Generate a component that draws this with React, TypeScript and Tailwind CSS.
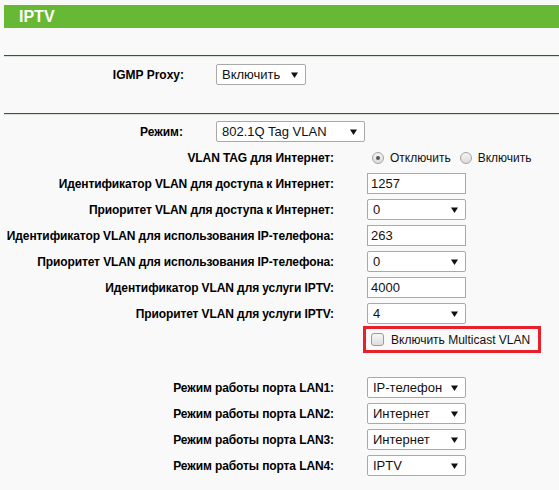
import React from "react";

const Arrow = () => (
  <svg width="7" height="6" viewBox="0 0 7 6" className="shrink-0">
    <path d="M0 0.5 L7 0.5 L3.5 6 Z" fill="#111" />
  </svg>
);

const FakeSelect = ({ value, width }: { value: string; width: string }) => (
  <div
    className={`${width} h-[21px] flex items-center justify-between bg-white border border-[#a9a9a9] rounded-[2px] pl-[5px] pr-[7px] text-[13px] text-[#111]`}
  >
    <span>{value}</span>
    <Arrow />
  </div>
);

const TextBox = ({ value }: { value: string }) => (
  <div className="w-[99px] h-[21px] flex items-center bg-white border border-[#a9a9a9] pl-[3px] text-[13px] text-[#111]">
    {value}
  </div>
);

const Radio = ({ checked }: { checked?: boolean }) => (
  <span className="w-[12px] h-[12px] rounded-full border border-[#a3a3a3] bg-gradient-to-b from-[#f4f4f4] to-[#dcdcdc] flex items-center justify-center">
    {checked && <span className="w-[4px] h-[4px] rounded-full bg-[#555]" />}
  </span>
);

const Row = ({ label, children }: { label: string; children: React.ReactNode }) => (
  <div className="flex items-center h-[21px] mt-[5px]">
    <div className="w-[334px] text-right font-bold text-[12px] text-black whitespace-nowrap tracking-[-0.1px]">
      {label}
    </div>
    <div className="ml-[33px] flex items-center">{children}</div>
  </div>
);

const Divider = () => (
  <div className="ml-[4px]">
    <div className="h-px bg-[#23603c]" />
    <div className="h-px bg-[#d3e5d8]" />
  </div>
);

export default function App() {
  return (
    <div className="w-[559px] h-[490px] overflow-hidden bg-[#f9f9f9] font-['Liberation_Sans',Arial,sans-serif] pt-[5px]">
      {/* header */}
      <div className="ml-[4px] h-[23px] bg-[#67b834] flex items-center pl-[15px]">
        <span className="text-white font-bold text-[16px] leading-none">IPTV</span>
      </div>

      <div className="h-[27px]" />
      <Divider />

      {/* IGMP */}
      <div className="flex items-center h-[21px] mt-[7px]">
        <div className="w-[184px] text-right font-bold text-[12px] text-black">IGMP Proxy:</div>
        <div className="ml-[32px]">
          <FakeSelect value="Включить" width="w-[90px]" />
        </div>
      </div>

      <div className="h-[28px]" />
      <Divider />

      {/* mode */}
      <div className="flex items-center h-[21px] mt-[6px]">
        <div className="w-[183px] text-right font-bold text-[12px] text-black">Режим:</div>
        <div className="ml-[33px]">
          <FakeSelect value="802.1Q Tag VLAN" width="w-[149px]" />
        </div>
      </div>

      <div className="mt-[3px]">
        <Row label="VLAN TAG для Интернет:">
          <div className="flex items-center pl-[5px] text-[12px] text-[#111]">
            <Radio checked />
            <span className="ml-[6px]">Отключить</span>
            <span className="ml-[9px]">
              <Radio />
            </span>
            <span className="ml-[6px]">Включить</span>
          </div>
        </Row>
        <Row label="Идентификатор VLAN для доступа к Интернет:">
          <TextBox value="1257" />
        </Row>
        <Row label="Приоритет VLAN для доступа к Интернет:">
          <FakeSelect value="0" width="w-[99px]" />
        </Row>
        <Row label="Идентификатор VLAN для использования IP-телефона:">
          <TextBox value="263" />
        </Row>
        <Row label="Приоритет VLAN для использования IP-телефона:">
          <FakeSelect value="0" width="w-[99px]" />
        </Row>
        <Row label="Идентификатор VLAN для услуги IPTV:">
          <TextBox value="4000" />
        </Row>
        <Row label="Приоритет VLAN для услуги IPTV:">
          <FakeSelect value="4" width="w-[99px]" />
        </Row>
      </div>

      {/* multicast */}
      <div className="flex mt-[2px]">
        <div className="w-[363px]" />
        <div className="w-[178px] h-[27px] border-[3px] border-[#e8202a] flex items-center pl-[5px] text-[12px] text-[#111]">
          <span className="w-[13px] h-[13px] rounded-[3px] border border-[#9a9a9a] bg-gradient-to-b from-[#f6f6f6] to-[#dedede]" />
          <span className="ml-[7px]">Включить Multicast VLAN</span>
        </div>
      </div>

      <div className="mt-[24px]">
        <Row label="Режим работы порта LAN1:">
          <FakeSelect value="IP-телефон" width="w-[99px]" />
        </Row>
        <Row label="Режим работы порта LAN2:">
          <FakeSelect value="Интернет" width="w-[99px]" />
        </Row>
        <Row label="Режим работы порта LAN3:">
          <FakeSelect value="Интернет" width="w-[99px]" />
        </Row>
        <Row label="Режим работы порта LAN4:">
          <FakeSelect value="IPTV" width="w-[99px]" />
        </Row>
      </div>
    </div>
  );
}
